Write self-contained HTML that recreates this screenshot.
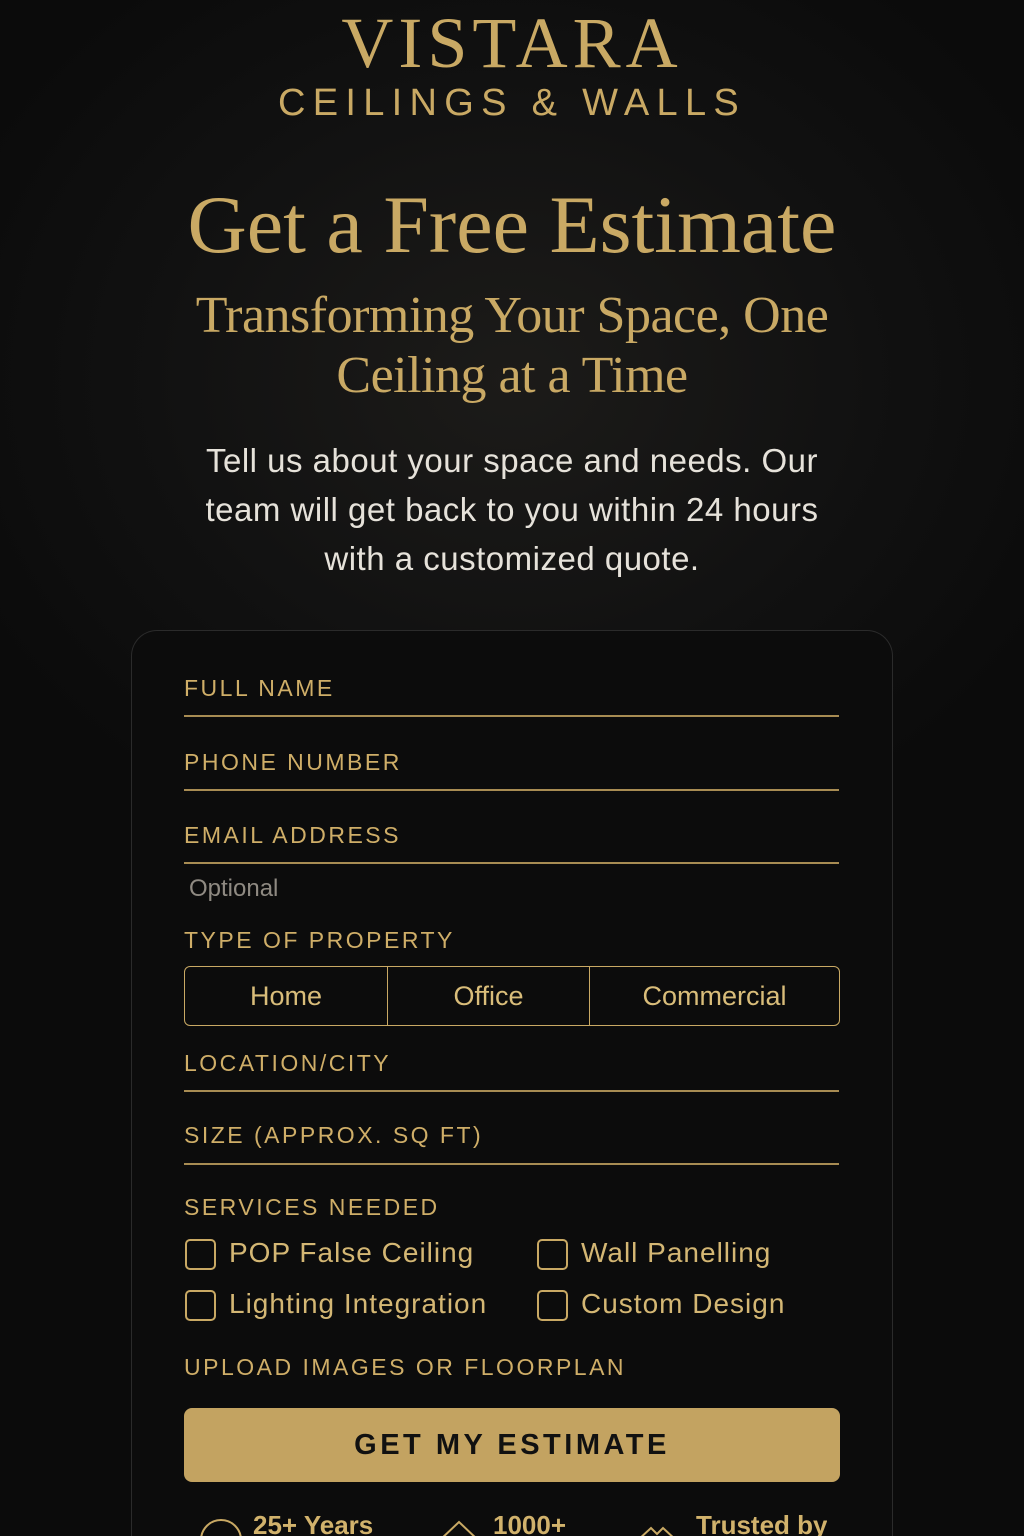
<!DOCTYPE html>
<html><head><meta charset="utf-8"><style>
*{margin:0;padding:0;box-sizing:border-box}
html,body{width:1024px;height:1536px;overflow:hidden;background:#0b0b0b}
#w{position:relative;width:1024px;height:1536px;overflow:hidden;background:radial-gradient(ellipse 600px 500px at 512px 380px,#1c1b19 0%,#111 60%,#0b0b0b 100%);font-family:"Liberation Sans",sans-serif;color:#c9a964}
.a{position:absolute}
.serif{font-family:"Liberation Serif",serif}
.c{left:0;width:1024px;text-align:center}
.card{left:131px;top:630px;width:762px;height:906px;border:1px solid #2b2b2b;border-bottom:none;border-radius:26px 26px 0 0;background:#0c0c0c}
.lab{left:184px;font-size:23px;letter-spacing:2.5px;color:#cfae68}
.line{left:184px;width:655px;height:2px;background:#a88c53}
.seg{left:184px;top:966px;width:656px;height:60px;border:1.5px solid #c9a964;border-radius:6px;display:flex}
.seg div{display:flex;align-items:center;justify-content:center;font-size:27px;color:#d9bd7a}
.cb{width:31px;height:31px;border:2px solid #c9a964;border-radius:5px}
.ct{font-size:28px;color:#d4b774;letter-spacing:1px}
</style></head><body><div id="w">
<div class="a c serif" style="top:2px;font-size:72px;letter-spacing:5px;color:#c9a964">VISTARA</div>
<div class="a c" style="top:82px;font-size:38px;letter-spacing:7.3px;color:#c9a964">CEILINGS &amp; WALLS</div>
<div class="a c serif" style="top:178px;font-size:82px;color:#c9a964">Get a Free Estimate</div>
<div class="a c serif" style="top:286px;font-size:52px;line-height:60px;color:#c9a964;letter-spacing:-.5px">Transforming Your Space, One<br>Ceiling at a Time</div>
<div class="a c" style="top:436px;font-size:33px;line-height:49px;color:#e6e2da;letter-spacing:.5px">Tell us about your space and needs. Our<br>team will get back to you within 24 hours<br>with a customized quote.</div>
<div class="a card"></div>
<div class="a lab" style="top:675px">FULL NAME</div>
<div class="a line" style="top:715px"></div>
<div class="a lab" style="top:749px">PHONE NUMBER</div>
<div class="a line" style="top:789px"></div>
<div class="a lab" style="top:822px">EMAIL ADDRESS</div>
<div class="a line" style="top:862px"></div>
<div class="a" style="left:189px;top:875px;font-size:24px;color:#8f8a82">Optional</div>
<div class="a lab" style="top:927px">TYPE OF PROPERTY</div>
<div class="a seg"><div style="width:203px;border-right:1.5px solid #c9a964">Home</div><div style="width:202px;border-right:1.5px solid #c9a964">Office</div><div style="flex:1">Commercial</div></div>
<div class="a lab" style="top:1050px">LOCATION/CITY</div>
<div class="a line" style="top:1090px"></div>
<div class="a lab" style="top:1122px">SIZE (APPROX. SQ FT)</div>
<div class="a line" style="top:1163px"></div>
<div class="a lab" style="top:1194px">SERVICES NEEDED</div>
<div class="a cb" style="left:185px;top:1239px"></div><div class="a ct" style="left:229px;top:1237px">POP False Ceiling</div>
<div class="a cb" style="left:537px;top:1239px"></div><div class="a ct" style="left:581px;top:1237px">Wall Panelling</div>
<div class="a cb" style="left:185px;top:1290px"></div><div class="a ct" style="left:229px;top:1288px">Lighting Integration</div>
<div class="a cb" style="left:537px;top:1290px"></div><div class="a ct" style="left:581px;top:1288px">Custom Design</div>
<div class="a lab" style="top:1354px">UPLOAD IMAGES OR FLOORPLAN</div>
<div class="a" style="left:184px;top:1408px;width:656px;height:74px;background:#c3a361;border-radius:8px;display:flex;align-items:center;justify-content:center;font-size:29px;font-weight:bold;letter-spacing:3.5px;color:#111">GET MY ESTIMATE</div>
<svg class="a" style="left:195px;top:1510px" width="660" height="26"><g fill="none" stroke="#c9a964" stroke-width="2"><circle cx="26" cy="30" r="20"/><path d="M245 30 L264 12 L283 30"/><path d="M443 30 L456 18 L462 24 L468 18 L481 30"/></g></svg>
<div class="a" style="left:253px;top:1510px;font-size:26px;font-weight:bold;color:#d1b26c;height:26px;overflow:hidden">25+ Years</div>
<div class="a" style="left:493px;top:1510px;font-size:26px;font-weight:bold;color:#d1b26c;height:26px;overflow:hidden">1000+</div>
<div class="a" style="left:696px;top:1510px;font-size:26px;font-weight:bold;color:#d1b26c;height:26px;overflow:hidden">Trusted by</div>
</div></body></html>
